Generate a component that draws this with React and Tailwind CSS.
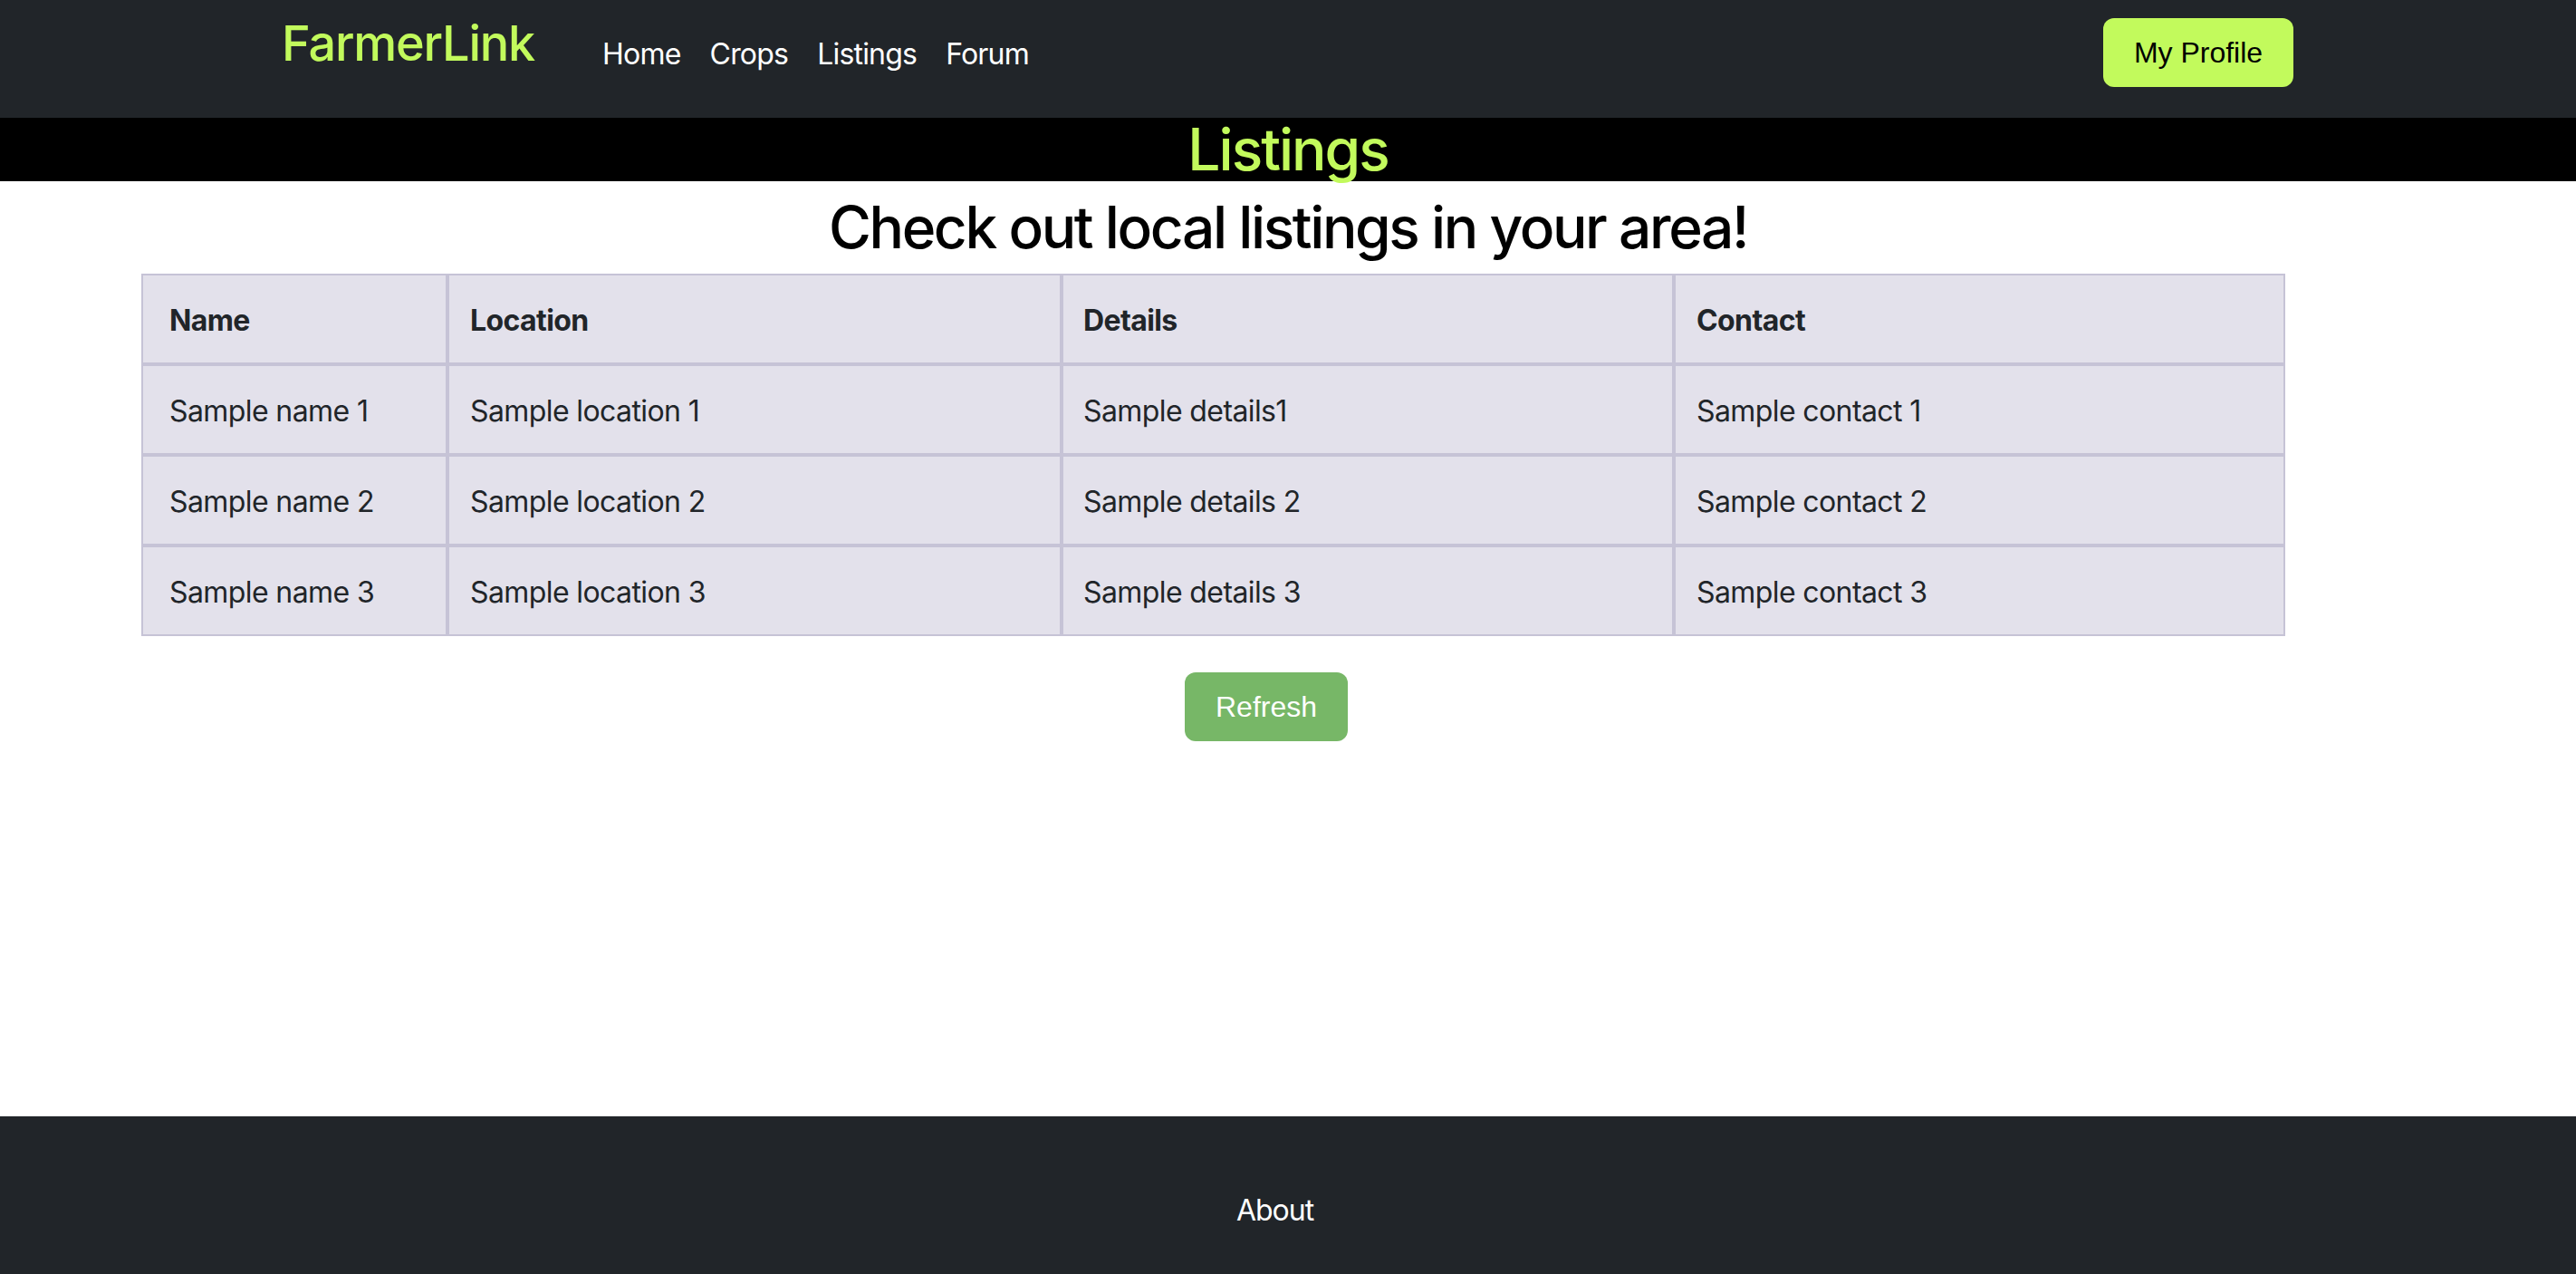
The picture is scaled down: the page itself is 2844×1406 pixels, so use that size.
const NAV = ['Home', 'Crops', 'Listings', 'Forum']

const COLS = [
  { label: 'Name', w: 'w-[338px]', pad: 'pl-[29px]' },
  { label: 'Location', w: 'w-[678px]', pad: 'pl-[23px]' },
  { label: 'Details', w: 'w-[676px]', pad: 'pl-[22px]' },
  { label: 'Contact', w: 'w-[675px]', pad: 'pl-[23px]' },
]

const ROWS = [
  ['Sample name 1', 'Sample location 1', 'Sample details1', 'Sample contact 1'],
  ['Sample name 2', 'Sample location 2', 'Sample details 2', 'Sample contact 2'],
  ['Sample name 3', 'Sample location 3', 'Sample details 3', 'Sample contact 3'],
]

// one cell: 2px border each side, borders double up inside the grid
const cell =
  'border-2 border-[#c6c3d6] bg-[#e3e1eb] pr-[22px] pt-[26px] pb-[22px] text-left text-[32px] leading-[48px] tracking-[-0.6px] text-[#212529]'

function Navbar() {
  return (
    <nav className="flex h-[130px] items-center bg-[#212529] pb-[14px] pl-[311px] pr-[312px]">
      <a className="mb-[20px] text-[54px] font-medium leading-none tracking-[-1.2px] text-[#c2fa5c]">FarmerLink</a>
      <ul className="ml-[59px] mt-[3px] flex">
        {NAV.map((n) => (
          <li key={n}>
            <a className="block px-[16px] text-[32px] leading-[48px] tracking-[-0.8px] text-white">{n}</a>
          </li>
        ))}
      </ul>
      <button className="ml-auto h-[76px] w-[210px] rounded-[12px] bg-[#c2fa5c] font-['Liberation_Sans',Arial,sans-serif] text-[32px] text-black">
        My Profile
      </button>
    </nav>
  )
}

export default function App() {
  return (
    <div className="flex min-h-screen flex-col bg-white font-['Inter',sans-serif]">
      <Navbar />
      <div className="h-[70px] bg-black text-center text-[64px] font-medium leading-[70px] tracking-[-2px] text-[#c2fa5c]">
        Listings
      </div>

      <main className="flex flex-1 flex-col items-start">
        <h2 className="mb-[13px] mt-[12px] w-full text-center text-[64px] font-medium leading-[77px] tracking-[-2.4px] text-black">
          Check out local listings in your area!
        </h2>
        <table className="ml-[156px] w-[2367px] table-fixed border-separate border-spacing-0">
          <thead>
            <tr>
              {COLS.map((c) => (
                <th key={c.label} className={`${cell} ${c.w} ${c.pad} font-bold`}>
                  {c.label}
                </th>
              ))}
            </tr>
          </thead>
          <tbody>
            {ROWS.map((r, i) => (
              <tr key={i}>
                {r.map((v, j) => (
                  <td key={v} className={`${cell} ${COLS[j].pad} font-normal`}>
                    {v}
                  </td>
                ))}
              </tr>
            ))}
          </tbody>
        </table>
        <button className="ml-[1308px] mt-[40px] h-[76px] w-[180px] rounded-[12px] bg-[#77b767] font-['Liberation_Sans',Arial,sans-serif] text-[32px] text-white">
          Refresh
        </button>
      </main>

      <footer className="flex h-[174px] justify-center bg-[#212529] pr-[29px] pt-[80px]">
        <a className="text-[32px] leading-[48px] tracking-[-1px] text-white">About</a>
      </footer>
    </div>
  )
}
